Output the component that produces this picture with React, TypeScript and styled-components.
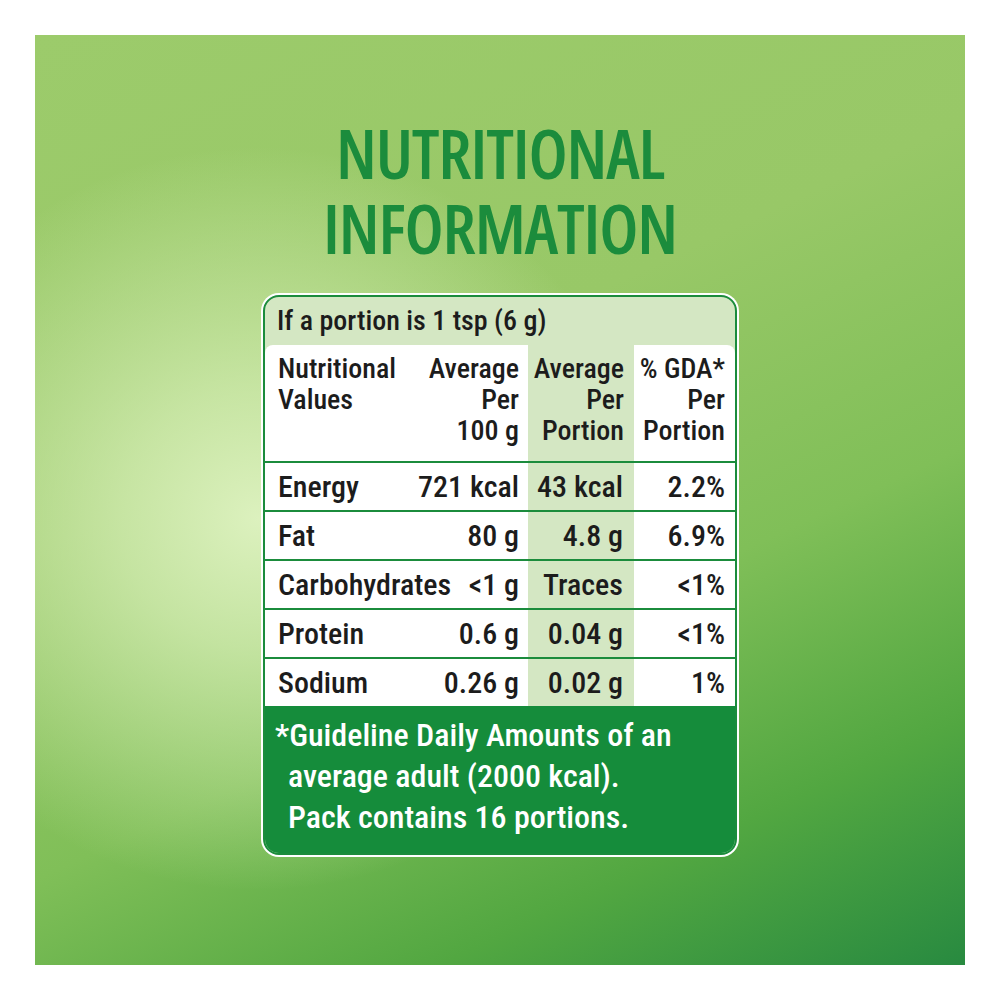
import React from "react";
import styled, { createGlobalStyle } from "styled-components";

const Global = createGlobalStyle`
  html, body { margin: 0; padding: 0; background: #ffffff; }
  body { width: 1000px; height: 1000px; }
`;

const GREEN = "#1b8c3c";
const LIGHT = "#d4e7c3";

const Page = styled.div`
  width: 1000px;
  height: 1000px;
  padding: 35px;
  box-sizing: border-box;
  background: #ffffff;
`;

const Panel = styled.div`
  width: 930px;
  height: 930px;
  display: flex;
  flex-direction: column;
  align-items: center;
  padding-top: 80px;
  box-sizing: border-box;
  background:
    radial-gradient(ellipse 42% 40% at 24% 52%, rgba(220, 241, 190, 1) 0%, rgba(214, 238, 182, 0.75) 35%, rgba(200, 230, 165, 0) 100%),
    linear-gradient(155deg, #9ccb6b 0%, #98c867 38%, #80bf58 62%, #52a741 82%, #288a40 100%);
`;

const Title = styled.h1`
  margin: 0;
  font-family: "Open Sans", "Liberation Sans", sans-serif;
  font-stretch: condensed;
  font-weight: 600;
  font-size: 69px;
  line-height: 75px;
  letter-spacing: -1.2px;
  color: ${GREEN};
  text-align: center;
`;

const TitleLine = styled.span`
  display: block;
  height: 75px;
`;

const Card = styled.div`
  margin-top: 30px;
  width: 474px;
  height: 560px;
  box-sizing: border-box;
  border: 2px solid ${GREEN};
  border-radius: 16px;
  box-shadow: 0 0 0 2px #ffffff;
  background: ${LIGHT};
  overflow: hidden;
  display: flex;
  flex-direction: column;
  font-family: Roboto, "Liberation Sans", sans-serif;
  font-stretch: condensed;
  font-weight: 500;
  color: #1c1c1c;
`;

const PortionRow = styled.div`
  height: 48px;
  display: flex;
  align-items: center;
  padding-left: 12px;
  font-size: 28px;
  line-height: 1;
`;

const Grid = styled.div`
  display: grid;
  grid-template-columns: 263px 106px 101px;
`;

const HeadRow = styled(Grid)`
  height: 116px;
  border-bottom: 2px solid ${GREEN};
  font-size: 28px;
  line-height: 31px;
`;

const Row = styled(Grid)<{ last?: boolean }>`
  height: ${(p) => (p.last ? 47 : 49)}px;
  box-sizing: border-box;
  border-bottom: ${(p) => (p.last ? "none" : `2px solid ${GREEN}`)};
  font-size: 30px;
  line-height: 30px;
`;

const HeadCell = styled.div<{ shade?: boolean; corner?: "left" | "right" }>`
  background: ${(p) => (p.shade ? LIGHT : "#ffffff")};
  border-top-left-radius: ${(p) => (p.corner === "left" ? "8px" : "0")};
  border-top-right-radius: ${(p) => (p.corner === "right" ? "8px" : "0")};
  padding: 8px 10px 0 0;
  text-align: right;
  white-space: nowrap;
`;

const HeadMain = styled(HeadCell)`
  display: flex;
  justify-content: space-between;
  padding: 8px 9px 0 13px;
`;

const Left = styled.div`
  text-align: left;
`;

const Right = styled.div`
  text-align: right;
`;

const MainCell = styled.div`
  background: #ffffff;
  display: flex;
  align-items: center;
  justify-content: space-between;
  padding: 0 9px 0 13px;
  white-space: nowrap;
`;

const ValueCell = styled.div<{ shade?: boolean; pr: number }>`
  background: ${(p) => (p.shade ? LIGHT : "#ffffff")};
  display: flex;
  align-items: center;
  justify-content: flex-end;
  padding-right: ${(p) => p.pr}px;
  white-space: nowrap;
`;

const Footer = styled.div`
  flex: 1;
  background: #158c3b;
  color: #ffffff;
  font-size: 32px;
  line-height: 41px;
  padding: 9px 0 0 23px;
  text-indent: -13px;
  white-space: nowrap;
`;

const rows: [string, string, string, string][] = [
  ["Energy", "721 kcal", "43 kcal", "2.2%"],
  ["Fat", "80 g", "4.8 g", "6.9%"],
  ["Carbohydrates", "<1 g", "Traces", "<1%"],
  ["Protein", "0.6 g", "0.04 g", "<1%"],
  ["Sodium", "0.26 g", "0.02 g", "1%"],
];

export default function App() {
  return (
    <Page>
      <Global />
      <Panel>
        <Title>
          <TitleLine>NUTRITIONAL</TitleLine>
          <TitleLine>INFORMATION</TitleLine>
        </Title>
        <Card>
          <PortionRow>If a portion is 1 tsp (6 g)</PortionRow>
          <HeadRow>
            <HeadMain corner="left">
              <Left>
                Nutritional
                <br />
                Values
              </Left>
              <Right>
                Average
                <br />
                Per
                <br />
                100 g
              </Right>
            </HeadMain>
            <HeadCell shade>
              Average
              <br />
              Per
              <br />
              Portion
            </HeadCell>
            <HeadCell corner="right">
              % GDA*
              <br />
              Per
              <br />
              Portion
            </HeadCell>
          </HeadRow>
          {rows.map(([label, per100, perPortion, gda], i) => (
            <Row key={label} last={i === rows.length - 1}>
              <MainCell>
                <span>{label}</span>
                <span>{per100}</span>
              </MainCell>
              <ValueCell shade pr={11}>
                {perPortion}
              </ValueCell>
              <ValueCell pr={10}>{gda}</ValueCell>
            </Row>
          ))}
          <Footer>
            *Guideline Daily Amounts of an
            <br />
            average adult (2000 kcal).
            <br />
            Pack contains 16 portions.
          </Footer>
        </Card>
      </Panel>
    </Page>
  );
}
